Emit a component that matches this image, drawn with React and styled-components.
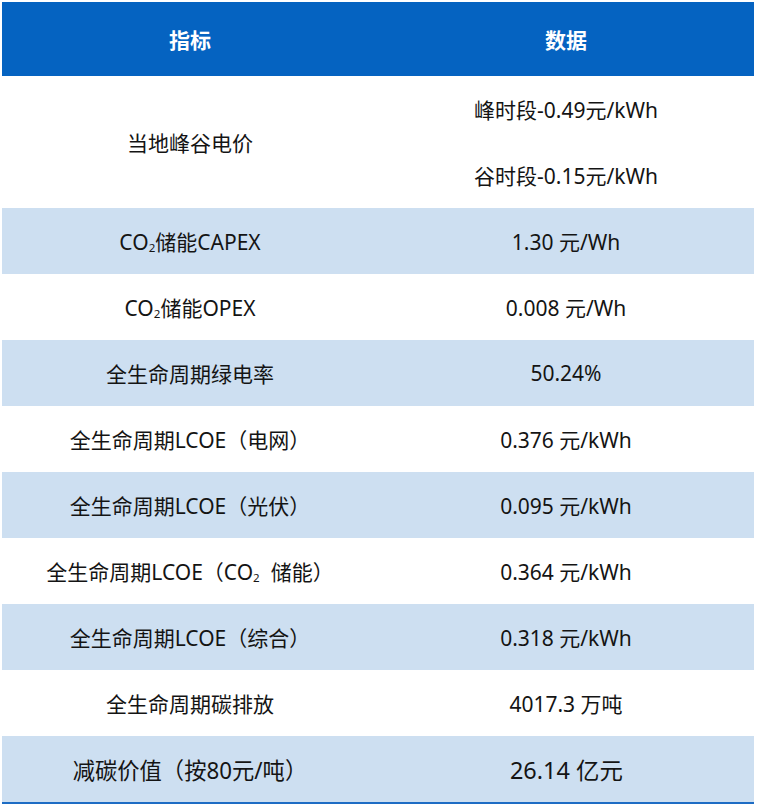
import React from "react";
import styled, { createGlobalStyle } from "styled-components";

const GlobalStyle = createGlobalStyle`
	body {
		margin: 0;
		background: #fff;
		font-family: "Noto Sans", "Noto Sans CJK SC", sans-serif;
		color: #141414;
	}
`;

const Wrap = styled.div`
	padding: 2px 3px 0 2px;
`;

const Table = styled.div`
	width: 752px;
	border-bottom: 2px solid #1d6cc4;
`;

const Header = styled.div`
	display: grid;
	grid-template-columns: 1fr 1fr;
	height: 74px;
	background: #0563c1;
`;

const HeadCell = styled.div`
	display: flex;
	align-items: center;
	justify-content: center;
	color: #fff;
	font-size: 21px;
	font-weight: 700;
	font-family: "Noto Sans CJK SC", sans-serif;
`;

const Row = styled.div`
	display: grid;
	grid-template-columns: 1fr 1fr;
	background: ${({ $striped }) => ($striped ? "#cddff1" : "#fff")};
`;

const Lines = styled.div`
	display: flex;
	flex-direction: column;
`;

const Cell = styled.div`
	display: flex;
	align-items: center;
	justify-content: center;
	min-height: 66px;
	font-size: 21px;
	white-space: nowrap;
`;

const Text = styled.span`
	display: inline-block;
	font-size: ${({ $narrow }) => ($narrow ? "23px" : "inherit")};
	transform: ${({ $narrow }) => ($narrow ? `scaleX(${$narrow})` : "none")};
`;

const Sub = styled.span`
	font-size: 0.55em;
	vertical-align: -0.2em;
	line-height: 0;
`;

const rows = [
	{ id: 1, name: <>CO<Sub>2</Sub>储能CAPEX</>, value: "1.30 元/Wh" },
	{ id: 2, name: <>CO<Sub>2</Sub>储能OPEX</>, value: "0.008 元/Wh" },
	{ id: 3, name: "全生命周期绿电率", value: "50.24%" },
	{ id: 4, name: "全生命周期LCOE（电网）", value: "0.376 元/kWh" },
	{ id: 5, name: "全生命周期LCOE（光伏）", value: "0.095 元/kWh" },
	{ id: 6, name: <>全生命周期LCOE（CO<Sub>2</Sub>&nbsp; 储能）</>, value: "0.364 元/kWh" },
	{ id: 7, name: "全生命周期LCOE（综合）", value: "0.318 元/kWh" },
	{ id: 8, name: "全生命周期碳排放", value: "4017.3 万吨" },
	{ id: 9, name: "减碳价值（按80元/吨）", value: "26.14 亿元", narrow: [0.97, 1.02] },
];

function App() {
	return (
		<>
			<GlobalStyle />
			<Wrap>
				<Table>
					<Header>
						<HeadCell>指标</HeadCell>
						<HeadCell>数据</HeadCell>
					</Header>
					<Row>
						<Cell>当地峰谷电价</Cell>
						<Lines>
							<Cell>峰时段-0.49元/kWh</Cell>
							<Cell>谷时段-0.15元/kWh</Cell>
						</Lines>
					</Row>
					{rows.map(({ id, name, value, narrow }) => (
						<Row key={id} $striped={id % 2 === 1}>
							<Cell>
								<Text $narrow={narrow && narrow[0]}>{name}</Text>
							</Cell>
							<Cell>
								<Text $narrow={narrow && narrow[1]}>{value}</Text>
							</Cell>
						</Row>
					))}
				</Table>
			</Wrap>
		</>
	);
}

export default App;
